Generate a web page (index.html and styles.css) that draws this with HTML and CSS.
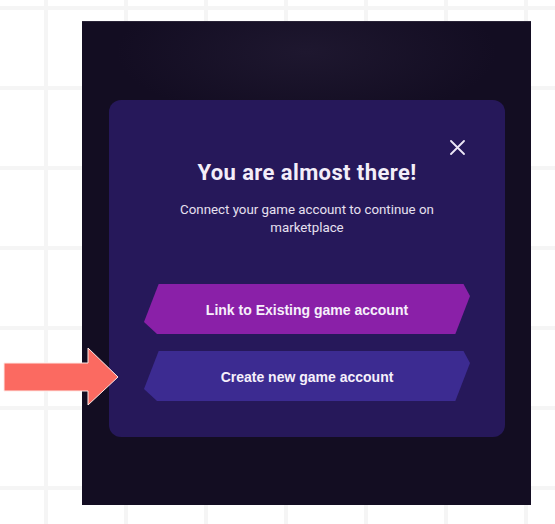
FILE: index.html
```html
<!DOCTYPE html>
<html lang="en">
<head>
<meta charset="utf-8">
<title>Connect game account</title>
<link rel="stylesheet" href="styles.css">
</head>
<body>
  <div class="panel">
    <div class="card">
      <div class="card-head">
        <button class="close" aria-label="Close">
          <svg width="15" height="15" viewBox="0 0 15 15"><path d="M1 1 L14 14 M14 1 L1 14" stroke="#ece6f6" stroke-width="1.8" stroke-linecap="round" fill="none"/></svg>
        </button>
      </div>
      <h1 class="title">You are almost there!</h1>
      <p class="subtitle">Connect your game account to continue on<br>marketplace</p>
      <div class="actions">
        <button class="btn btn-link">Link to Existing game account</button>
        <button class="btn btn-create">Create new game account</button>
      </div>
    </div>
  </div>
  <svg class="pointer" width="125" height="75" viewBox="0 0 125 75">
    <polygon points="4,23 88,23 88,8 118,37 88,65 88,51 4,51" fill="#fb6a61" stroke="#ffe9e6" stroke-width="1"/>
  </svg>
</body>
</html>
```
FILE: styles.css
```css
html, body {
  margin: 0;
  padding: 0;
}
body {
  width: 555px;
  height: 524px;
  overflow: hidden;
  position: relative;
  background-color: #ffffff;
  background-image:
    linear-gradient(to right, transparent 44px, #f5f5f5 44px, #f5f5f5 48px, transparent 48px),
    linear-gradient(to bottom, transparent 6px, #f5f5f5 6px, #f5f5f5 10px, transparent 10px);
  background-size: 80px 80px;
  font-family: Roboto, "Liberation Sans", sans-serif;
}
.panel {
  box-sizing: border-box;
  margin: 21px 0 0 82px;
  width: 449px;
  height: 484px;
  padding: 79px 26px 0 27px;
  background-color: #130d22;
  background-image: radial-gradient(ellipse 190px 70px at 50% 30px, #1e172f 0%, rgba(30,23,47,0.5) 50%, rgba(19,13,34,0) 100%);
  border-top: 1px solid #2a2438;
}
.card {
  box-sizing: border-box;
  margin-top: -1px;
  width: 396px;
  height: 337px;
  background: #26185a;
  border-radius: 12px;
  padding: 40px 0 35px;
  display: flex;
  flex-direction: column;
  align-items: center;
}
.card-head {
  align-self: stretch;
  display: flex;
  justify-content: flex-end;
  padding-right: 40px;
  height: 15px;
}
.close {
  width: 15px;
  height: 15px;
  padding: 0;
  border: 0;
  background: none;
  display: block;
  cursor: pointer;
}
.close svg {
  display: block;
}
.title {
  margin: 4px 0 0;
  font-size: 22px;
  line-height: 28px;
  font-weight: 700;
  color: #f3eef9;
  letter-spacing: 0.4px;
}
.subtitle {
  margin: 14px 0 0;
  font-size: 13.3px;
  line-height: 18px;
  color: #e6e0f0;
  text-align: center;
}
.actions {
  margin-top: 47px;
  display: flex;
  flex-direction: column;
  gap: 17px;
}
.btn {
  width: 326px;
  height: 50px;
  border: 0;
  padding: 2px 0 0;
  font-family: "Liberation Sans", Arial, sans-serif;
  font-weight: 700;
  font-size: 14px;
  color: #f6f0fb;
  clip-path: polygon(4.5% 0, 98% 0, 100% 24%, 95.5% 100%, 4% 100%, 0 76%);
  cursor: pointer;
}
.btn-link {
  background: #8a20a8;
}
.btn-create {
  background: #3c2b91;
}
.pointer {
  position: absolute;
  left: 0;
  top: 340px;
}
```
